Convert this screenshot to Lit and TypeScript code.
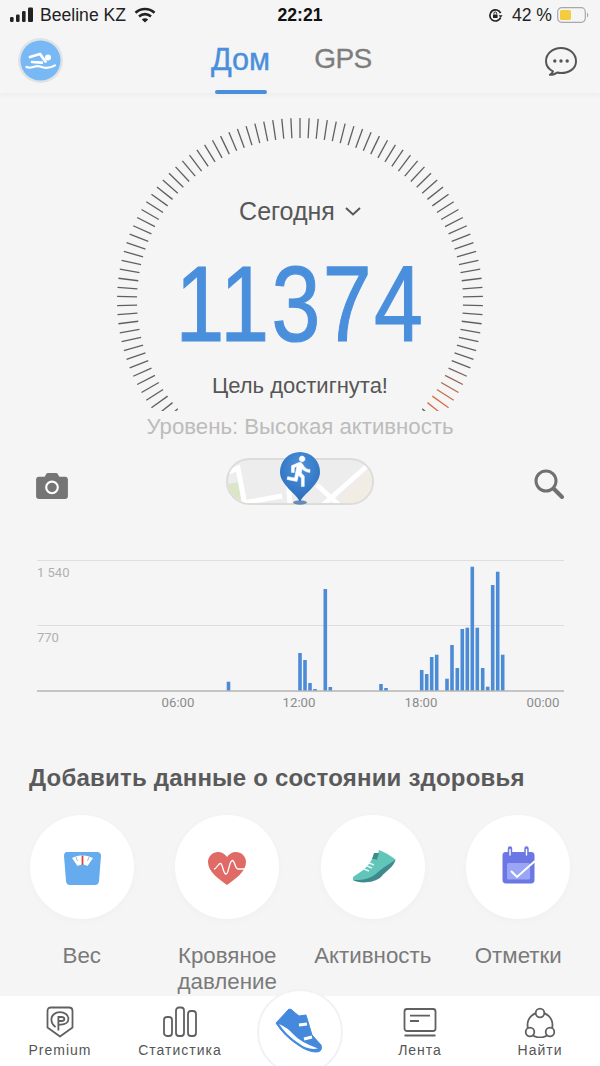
import { LitElement, html, css, svg } from "lit";
import { customElement } from "lit/decorators.js";

const BARS: [number, number][] = [
  [228.5, 681.7], [300, 653], [305, 660], [310, 683], [315, 689], [325.3, 589], [330.3, 687],
  [381, 684], [386, 688], [421.7, 670], [426.7, 674], [431.7, 657], [436.7, 654.7],
  [447, 678.7], [452, 645], [457.3, 668], [462.3, 629], [467.3, 627.7], [472.3, 566.7],
  [477.3, 627.7], [482.7, 668], [487.7, 686.7], [492.7, 585], [497.7, 571.7], [502.7, 654.7],
];

function tickColor(deg: number): string {
  if (deg < 112 || deg > 130) return "#606060";
  const t = Math.min(1, (deg - 112) / 12);
  const mix = (a: number, b: number) => Math.round(a + (b - a) * t);
  return `rgb(${mix(96, 214)},${mix(96, 110)},${mix(96, 70)})`;
}

const gaugeTicks = Array.from({ length: 126 }, (_, i) => {
  const deg = (i * 360) / 126;
  const a = (deg * Math.PI) / 180;
  const s = Math.sin(a);
  const c = Math.cos(a);
  return svg`<line x1=${300 + 163 * s} y1=${301 - 163 * c} x2=${300 + 183 * s} y2=${301 - 183 * c} stroke=${tickColor(deg)} stroke-width="1.3"></line>`;
});

const RUNNER = "M13.49 5.48c1.1 0 2-.9 2-2s-.9-2-2-2-2 .9-2 2 .9 2 2 2zm-3.6 13.9l1-4.4 2.1 2v6h2v-7.5l-2.1-2 .6-3c1.3 1.5 3.3 2.5 5.5 2.5v-2c-1.9 0-3.5-1-4.3-2.4l-1-1.6c-.4-.6-1-1-1.7-1-.3 0-.5.1-.8.1l-5.2 2.2v4.7h2v-3.4l1.8-.7-1.6 8.1-4.9-1-.4 2 7 1.4z";

@customElement("app-root")
export class AppRoot extends LitElement {
  static styles = css`
    :host {
      display: flex;
      flex-direction: column;
      width: 600px;
      height: 1066px;
      overflow: hidden;
      background: #f5f5f5;
      font-family: "Liberation Sans", Arial, sans-serif;
      color: #555;
    }
    svg { display: block; }
    .status {
      height: 30px;
      display: grid;
      grid-template-columns: 1fr auto 1fr;
      align-items: center;
      color: #222;
      font-size: 17.6px;
      flex: none;
    }
    .st-left { display: flex; align-items: center; padding-left: 10px; gap: 6px; }
    .st-time { font-weight: 700; color: #111; font-size: 17.6px; }
    .st-right { display: flex; align-items: center; justify-content: flex-end; padding-right: 11px; gap: 5px; }
    .st-pct { margin: 0 0 0 4px; font-size: 17.6px; }
    .header {
      height: 63px;
      flex: none;
      position: relative;
      display: flex;
      align-items: flex-start;
      justify-content: space-between;
      padding: 8px 23px 0 18px;
      box-sizing: border-box;
      box-shadow: 0 2px 5px rgba(0, 0, 0, 0.035);
    }
    .tabs {
      position: absolute;
      top: 0;
      left: 211px;
      display: flex;
      gap: 44px;
      line-height: 58px;
    }
    .tab-on { font-size: 30.6px; color: #4a8fdc; position: relative; -webkit-text-stroke: 0.4px #4a8fdc; }
    .tab-on::after {
      content: "";
      position: absolute;
      left: 4px;
      right: 3px;
      top: 60px;
      height: 4px;
      border-radius: 2px;
      background: #4a8fdc;
    }
    .tab-off { font-size: 28px; letter-spacing: -0.5px; color: #7d7d7d; -webkit-text-stroke: 0.3px #7d7d7d; }
    .chat { margin-top: 9px; }
    .gauge {
      margin-top: 22px;
      height: 296px;
      flex: none;
      display: grid;
    }
    .gauge > * { grid-area: 1 / 1; }
    .g-text {
      display: flex;
      flex-direction: column;
      align-items: center;
    }
    .today {
      margin-top: 80px;
      height: 32px;
      line-height: 32px;
      font-size: 25px;
      display: flex;
      align-items: center;
      gap: 10px;
      color: #575757;
    }
    .steps {
      margin-top: 21px;
      font-size: 107px;
      line-height: 112px;
      height: 112px;
      color: #4a8fdc;
      letter-spacing: 3px;
      transform: scaleX(0.82);
      -webkit-text-stroke: 1.2px #4a8fdc;
    }
    .goal {
      margin-top: 13px;
      font-size: 22px;
      line-height: 26px;
      color: #565656;
    }
    .level {
      flex: none;
      text-align: center;
      font-size: 22.2px;
      line-height: 32px;
      color: #bcbcbc;
    }
    .tools {
      flex: none;
      margin-top: 9px;
      height: 60px;
      display: grid;
      grid-template-columns: 1fr auto 1fr;
      align-items: center;
      padding: 0 36px;
    }
    .cam { justify-self: start; margin-top: 6px; }
    .find { justify-self: end; margin-top: 3px; }
    .toggle {
      display: grid;
      width: 148px;
      height: 60px;
      align-items: start;
      justify-items: center;
    }
    .toggle > * { grid-area: 1 / 1; }
    .map {
      margin-top: 6px;
      width: 148px;
      height: 47px;
      border-radius: 24px;
      border: 2px solid #dcdcd8;
      box-sizing: border-box;
      overflow: hidden;
      background: #ededed;
    }
    .chart { flex: none; margin-top: 43px; height: 160px; }
    .ylab { font-family: Roboto, sans-serif; font-size: 13px; fill: #b0b0b0; }
    .xlab { font-family: Roboto, sans-serif; font-size: 13.2px; fill: #8c8c8c; }
    h2 {
      margin: 48px 0 0 29px;
      font-size: 24px;
      letter-spacing: 0.2px;
      line-height: 30px;
      font-weight: 700;
      color: #5a5a5a;
      flex: none;
      white-space: nowrap;
    }
    .metrics {
      flex: none;
      margin-top: 22px;
      padding: 0 9px;
      display: grid;
      grid-template-columns: repeat(4, 1fr);
    }
    .metric { display: flex; flex-direction: column; align-items: center; }
    .disc {
      width: 104px;
      height: 104px;
      border-radius: 50%;
      background: #fff;
      box-shadow: 0 2px 8px rgba(0, 0, 0, 0.025);
    }
    .mlabel {
      margin-top: 24px;
      font-size: 22.3px;
      line-height: 26px;
      color: #7a7a7a;
      text-align: center;
      height: 52px;
      white-space: nowrap;
    }
    .spacer { flex: 1; }
    .bar {
      flex: none;
      height: 70px;
      background: #fff;
      display: grid;
      grid-template-columns: 120px 120px 120px 120px 120px;
      position: relative;
    }
    .item {
      display: flex;
      flex-direction: column;
      align-items: center;
      font-size: 14px;
      letter-spacing: 1px;
      color: #555;
      padding-top: 10px;
      box-sizing: border-box;
    }
    .item span { margin-top: 3px; line-height: 18px; white-space: nowrap; }
    .center-wrap { position: relative; }
    .center {
      position: absolute;
      left: 17px;
      top: -7px;
      width: 86px;
      height: 86px;
      box-sizing: border-box;
      border-radius: 50%;
      background: #fff;
      border: 2px solid #f0f2f4;
    }
  `;

  private signal() {
    return html`<svg width="24" height="16" viewBox="0 0 24 16">
      <rect x="0" y="10" width="3.6" height="5" rx="1.2" fill="#222"></rect>
      <rect x="6" y="7.5" width="3.6" height="7.5" rx="1.2" fill="#222"></rect>
      <rect x="12" y="4" width="3.6" height="11" rx="1.2" fill="#222"></rect>
      <rect x="18" y="0.5" width="5" height="14.5" rx="1.2" fill="#222"></rect>
    </svg>`;
  }

  private wifi() {
    return html`<svg width="22" height="16" viewBox="0 0 22 16" fill="none" stroke="#222" stroke-width="2.6" style="margin-left:2px">
      <path d="M1.5 5.8 C7 0.8 15 0.8 20.5 5.8"></path>
      <path d="M5 9.4 C8.5 6.4 13.5 6.4 17 9.4"></path>
      <path d="M11 15.5 L7.8 12.4 C9.6 10.9 12.4 10.9 14.2 12.4 Z" fill="#222" stroke="none"></path>
    </svg>`;
  }

  private battery() {
    return html`<svg width="32" height="16" viewBox="0 0 32 16">
      <rect x="0.7" y="0.7" width="27.6" height="14.6" rx="4" fill="none" stroke="#a8a8a8" stroke-width="1.2"></rect>
      <rect x="3" y="3" width="11" height="10" rx="1.6" fill="#f4cd3f"></rect>
      <path d="M30 5.5 a3 3 0 0 1 0 5 z" fill="#a8a8a8"></path>
    </svg>`;
  }

  private rotation() {
    return html`<svg width="15" height="15" viewBox="0 0 15 15" fill="none">
      <path d="M12.6 9.6 A5.6 5.6 0 1 1 12.6 5.2" stroke="#222" stroke-width="1.7"></path>
      <path d="M10.6 7.3 h4 l-2 2.4 z" fill="#222"></path>
      <rect x="5" y="6.4" width="4.6" height="3.6" rx=".6" fill="#222"></rect>
      <path d="M5.9 6.4 V5.4 a1.4 1.4 0 0 1 2.8 0 V6.4" stroke="#222" stroke-width="1"></path>
    </svg>`;
  }

  private avatar() {
    return html`<svg width="45" height="45" viewBox="18 38 45 45">
      <circle cx="40.5" cy="60.5" r="22.5" fill="#dfe3e6"></circle>
      <circle cx="40.5" cy="60.5" r="20" fill="#77b8f5"></circle>
      <circle cx="48" cy="57.6" r="3" fill="#fff"></circle>
      <path d="M30 57 L40 54 L45.5 61.5" fill="none" stroke="#fff" stroke-width="2.8" stroke-linecap="round" stroke-linejoin="round"></path>
      <path d="M32 62 L42 62.6" fill="none" stroke="#fff" stroke-width="2.6" stroke-linecap="round"></path>
      <path d="M26.5 67 C31 69.5 35 64.6 40 66.6 S49 69 55 65.4" fill="none" stroke="#fff" stroke-width="2.2" stroke-linecap="round"></path>
    </svg>`;
  }

  private chat() {
    return html`<svg class="chat" width="32" height="29" viewBox="0 0 32 29" fill="none" stroke="#555" stroke-width="2">
      <path d="M8 24.4 C3.6 22 1 18.6 1 14.2 C1 6.9 7.7 1 16 1 S31 6.9 31 14.2 S24.3 26 16 26 C14.6 26 13.4 25.8 12.2 25.5 C10.6 27 8.6 27.8 4.8 27.8 C6.8 26.8 7.8 25.8 8 24.4 Z" stroke-linejoin="round"></path>
      <circle cx="9.8" cy="14" r="1.7" fill="#555" stroke="none"></circle>
      <circle cx="16" cy="14" r="1.7" fill="#555" stroke="none"></circle>
      <circle cx="22.2" cy="14" r="1.7" fill="#555" stroke="none"></circle>
    </svg>`;
  }

  private chevron() {
    return html`<svg width="16" height="9" viewBox="0 0 16 9" fill="none" stroke="#575757" stroke-width="2"><path d="M1 1 L8 7.5 L15 1"></path></svg>`;
  }

  private camera() {
    return html`<svg class="cam" width="32" height="27" viewBox="0 0 33 28">
      <path d="M3 5 H9 L10.5 2 Q11 1 12.5 1 H20.5 Q22 1 22.5 2 L24 5 H30 Q33 5 33 8 V25 Q33 28 30 28 H3 Q0 28 0 25 V8 Q0 5 3 5 Z" fill="#757575"></path>
      <circle cx="16.5" cy="16" r="6" fill="none" stroke="#fff" stroke-width="2.2"></circle>
    </svg>`;
  }

  private search() {
    return html`<svg class="find" width="30" height="30" viewBox="0 0 30 30" fill="none" stroke="#707070">
      <circle cx="12" cy="12" r="10" stroke-width="3"></circle>
      <path d="M20 20 L28 28" stroke-width="4" stroke-linecap="round"></path>
    </svg>`;
  }

  private toggle() {
    return html`<div class="toggle">
      <div class="map">
        <svg width="144" height="43" viewBox="0 0 144 43">
          <path d="M0 24 L10 22 L13 40 L0 43 Z" fill="#dbe6c8"></path>
          <path d="M108 43 L144 8 V43 Z" fill="#f1ece4"></path>
          <g fill="none" stroke="#fff" stroke-width="5">
            <path d="M-2 13 L10 8 L17 45"></path>
            <path d="M15 43 L54 36"></path>
            <path d="M59 -2 L62 45"></path>
            <path d="M89 25 L112 46"></path>
            <path d="M139 6 L94 46"></path>
          </g>
        </svg>
      </div>
      <svg width="44" height="54" viewBox="0 0 44 54">
        <defs>
          <radialGradient id="pin" cx="50%" cy="30%" r="70%">
            <stop offset="0" stop-color="#4e93dc"></stop>
            <stop offset="1" stop-color="#2a6cbc"></stop>
          </radialGradient>
        </defs>
        <ellipse cx="22" cy="50.5" rx="7" ry="2.2" fill="#3a6ea8" opacity=".75"></ellipse>
        <path d="M22 50 C19 42 2 33 2 20 A20 20 0 0 1 42 20 C42 33 25 42 22 50 Z" fill="url(#pin)"></path>
        <svg x="5" y="2" width="34" height="34" viewBox="0 0 24 24"><path d=${RUNNER} fill="#fff" stroke="#fff" stroke-width=".4"></path></svg>
      </svg>
    </div>`;
  }

  private chart() {
    return html`<svg class="chart" width="600" height="160" viewBox="0 555 600 160">
      <line x1="37" y1="560.5" x2="564" y2="560.5" stroke="#dedede"></line>
      <line x1="37" y1="625.5" x2="564" y2="625.5" stroke="#dedede"></line>
      ${BARS.map(([x, top]) => svg`<rect x=${x - 1.8} y=${top} width="3.6" height=${691 - top} fill="#4c8cd6"></rect>`)}
      <line x1="37" y1="691" x2="564" y2="691" stroke="#b4b4b4" stroke-width="1.4"></line>
      <text class="ylab" x="37" y="577">1 540</text>
      <text class="ylab" x="37" y="642">770</text>
      <text class="xlab" x="178" y="707" text-anchor="middle">06:00</text>
      <text class="xlab" x="299" y="707" text-anchor="middle">12:00</text>
      <text class="xlab" x="421" y="707" text-anchor="middle">18:00</text>
      <text class="xlab" x="543" y="707" text-anchor="middle">00:00</text>
    </svg>`;
  }

  private scale() {
    return html`<svg width="104" height="104" viewBox="0 0 104 104">
      <path d="M37 37 H67 Q71 37 71 41 L69 66 Q68.6 70 65 70 H40 Q36.4 70 36 66 L34 41 Q34 37 37 37 Z" fill="#66abee"></path>
      <path d="M42 43 Q52 37.5 63 43 L57.5 51 Q52.5 48 47.5 51 Z" fill="#fff"></path>
      <path d="M52.5 40.5 V50" stroke="#cf4b40" stroke-width="1.8"></path>
      <path d="M46 42 L47.5 46 M59 42 L57.5 46" stroke="#9db8d0" stroke-width="1"></path>
    </svg>`;
  }

  private heart() {
    return html`<svg width="104" height="104" viewBox="0 0 104 104">
      <path d="M52 70 C44 64 33 57 33 47 C33 41 38 37 43 37 C47 37 50 39 52 42 C54 39 57 37 61 37 C66 37 71 41 71 47 C71 57 60 64 52 70 Z" fill="#e06a65"></path>
      <path d="M39 54 C42 54 43 48 45.5 48.5 C48 49 48 59 51 59 C54 59 54 45 57.5 45.5 C60 46 60 54 63 54 H70" fill="none" stroke="#fff" stroke-width="1.3"></path>
    </svg>`;
  }

  private shoe() {
    return html`<svg width="104" height="104" viewBox="0 0 104 104">
      <path d="M32 62 C39 57 46 54 51 44 L56 45 L58 35 C63 37 69 40 74.5 44.5 C72 51 64 55 58 60 C52 66 38 68 32 65 Z" fill="#62c5b9"></path>
      <path d="M51 44 L53 38 L58 38 L56 45 Z" fill="#3c8c8c"></path>
      <path d="M74.5 44.5 C73 52 65 56 60 62 C54 68 38 69 32 65 C40 65.5 50 64 56 58 C62 52 68 50 74.5 44.5 Z" fill="#3f8a8c"></path>
      <path d="M48 48 L53 50 M46 51 L51 53 M43 54 L48 56" stroke="#e6f6f3" stroke-width="1.4"></path>
    </svg>`;
  }

  private calendar() {
    return html`<svg width="104" height="104" viewBox="0 0 104 104">
      <rect x="36.5" y="37" width="32" height="31.5" rx="3.4" fill="#6b77e2"></rect>
      <rect x="41" y="48" width="23" height="16.5" rx="1.5" fill="#9aa6f3"></rect>
      <path d="M44 33.5 V41 M60.5 33.5 V41" stroke="#6b77e2" stroke-width="4.4" stroke-linecap="round"></path>
      <path d="M44 34.5 V40 M60.5 34.5 V40" stroke="#fff" stroke-width="1.4" stroke-linecap="round"></path>
      <path d="M45 56 L51 62 L69 46" fill="none" stroke="#fff" stroke-width="2"></path>
    </svg>`;
  }

  private premium() {
    return html`<svg width="28" height="32" viewBox="0 0 28 32" fill="none" stroke="#606060" stroke-width="1.8">
      <path d="M5 1.5 H23 Q26.5 1.5 26.5 5 V21.5 L14 30.5 L1.5 21.5 V5 Q1.5 1.5 5 1.5 Z" stroke-linejoin="round"></path>
      <path d="M9.6 21 C6.5 19 5.4 16.2 5.4 13.6 C5.4 9.2 9 6.2 14 6.2 C18.6 6.2 22.4 8.8 22.4 12.8 C22.4 16.6 19 18.6 15 18.6 H12.4 M12.4 24.5 V11 H15.4 C17.2 11 18.4 11.8 18.4 13 C18.4 14.3 17.2 15 15.4 15 H12.4"></path>
    </svg>`;
  }

  private stats() {
    return html`<svg width="34" height="32" viewBox="0 0 34 32" fill="none" stroke="#606060" stroke-width="1.8">
      <rect x="1" y="11" width="8" height="19" rx="3"></rect>
      <rect x="13" y="1.5" width="8" height="28.5" rx="3"></rect>
      <rect x="25" y="5" width="8" height="25" rx="3"></rect>
    </svg>`;
  }

  private feed() {
    return html`<svg width="34" height="32" viewBox="0 0 34 32" fill="none" stroke="#606060" stroke-width="1.8">
      <rect x="1.5" y="3" width="31" height="22" rx="2.5"></rect>
      <path d="M7 9.6 H27 M7 15 H16"></path>
      <path d="M1.5 29.5 H32.5" stroke-width="2"></path>
    </svg>`;
  }

  private find() {
    return html`<svg width="34" height="32" viewBox="0 0 34 32" fill="none" stroke="#606060" stroke-width="1.8">
      <circle cx="17" cy="19" r="12.5"></circle>
      <circle cx="17" cy="7" r="4.3" fill="#fff"></circle>
      <circle cx="7" cy="26" r="4.3" fill="#fff"></circle>
      <circle cx="27" cy="26" r="4.3" fill="#fff"></circle>
    </svg>`;
  }

  private runShoe() {
    return html`<svg width="82" height="82" viewBox="9 5 82 82">
      <path d="M26 37 L39 23 Q42 23 44 26 L49 30 L56 29 L62 49 L71 59 Q73 66 66 66 Q58 66 48 59 Q34 50 26 37 Z" fill="#4489dc" stroke="#4489dc" stroke-width="1" stroke-linejoin="round"></path>
      <path d="M29 38 Q38 42 43 48 Q50 56 68 62.5 Q58 64.5 49 57.5 Q36 49 29 38 Z" fill="#fff"></path>
      <path d="M49 39 L57 38 M54 53 L62 51" stroke="#fff" stroke-width="3.2"></path>
    </svg>`;
  }

  render() {
    return html`
      <div class="status">
        <div class="st-left">${this.signal()}<span>Beeline KZ</span>${this.wifi()}</div>
        <div class="st-time">22:21</div>
        <div class="st-right">${this.rotation()}<span class="st-pct">42 %</span>${this.battery()}</div>
      </div>
      <div class="header">
        ${this.avatar()}
        <div class="tabs"><span class="tab-on">Дом</span><span class="tab-off">GPS</span></div>
        ${this.chat()}
      </div>
      <div class="gauge">
        <svg width="600" height="296" viewBox="0 115 600 296">${gaugeTicks}</svg>
        <div class="g-text">
          <div class="today">Сегодня ${this.chevron()}</div>
          <div class="steps">11374</div>
          <div class="goal">Цель достигнута!</div>
        </div>
      </div>
      <div class="level">Уровень: Высокая активность</div>
      <div class="tools">${this.camera()}${this.toggle()}${this.search()}</div>
      ${this.chart()}
      <h2>Добавить данные о состоянии здоровья</h2>
      <div class="metrics">
        <div class="metric"><div class="disc">${this.scale()}</div><div class="mlabel">Вес</div></div>
        <div class="metric"><div class="disc">${this.heart()}</div><div class="mlabel">Кровяное<br />давление</div></div>
        <div class="metric"><div class="disc">${this.shoe()}</div><div class="mlabel">Активность</div></div>
        <div class="metric"><div class="disc">${this.calendar()}</div><div class="mlabel">Отметки</div></div>
      </div>
      <div class="spacer"></div>
      <div class="bar">
        <div class="item">${this.premium()}<span>Premium</span></div>
        <div class="item">${this.stats()}<span>Статистика</span></div>
        <div class="center-wrap"><div class="center">${this.runShoe()}</div></div>
        <div class="item">${this.feed()}<span>Лента</span></div>
        <div class="item">${this.find()}<span>Найти</span></div>
      </div>
    `;
  }
}
